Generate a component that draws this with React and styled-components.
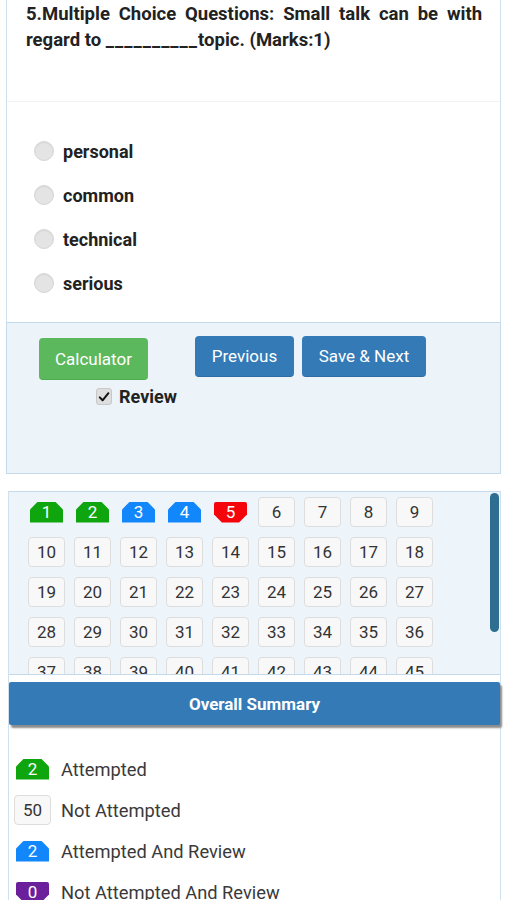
import React from 'react';
import styled, { createGlobalStyle, css } from 'styled-components';

const GlobalStyle = createGlobalStyle`
  html, body {
    margin: 0;
    padding: 0;
    background: #ffffff;
    font-family: Roboto, "Liberation Sans", Arial, sans-serif;
    color: #333333;
  }
`;

const Page = styled.div`
  width: 506px;
  height: 900px;
  overflow: hidden;
`;

const QuestionCard = styled.div`
  margin: 0 5px 0 6px;
  border-left: 1px solid #cfe0ee;
  border-right: 1px solid #cfe0ee;
  background: #ffffff;
`;

const QuestionText = styled.div`
  padding: 1px 18px 0 19px;
  height: 102px;
  box-sizing: border-box;
  font-size: 18.5px;
  font-weight: 700;
  line-height: 26px;
  text-align: justify;
  color: #222222;
  border-bottom: 1px solid #f0f2f4;
`;

const Blank = styled.span`
  letter-spacing: 1px;
`;

const OptionList = styled.div`
  display: flex;
  flex-direction: column;
  gap: 20px;
  padding: 37px 0 27px 27px;
`;

const Option = styled.label`
  display: flex;
  align-items: center;
  gap: 9px;
  height: 24px;
  font-size: 18px;
  font-weight: 700;
  color: #222222;
`;

const Radio = styled.span`
  width: 20px;
  height: 20px;
  border-radius: 50%;
  background: #e4e4e4;
  border: 1px solid #d6d6d6;
  box-sizing: border-box;
  box-shadow: inset 0 1px 1px rgba(0, 0, 0, 0.06);
`;

const ActionPanel = styled.div`
  margin: 0 5px 0 6px;
  height: 152px;
  box-sizing: border-box;
  background: #edf4f9;
  border: 1px solid #c3d9ec;
  display: flex;
  padding: 13px 0 0 32px;
`;

const LeftCol = styled.div`
  display: flex;
  flex-direction: column;
  align-items: flex-start;
  width: 156px;
`;

const Button = styled.button`
  border: none;
  border-radius: 4px;
  color: #ffffff;
  font-family: Roboto, "Liberation Sans", Arial, sans-serif;
  font-size: 17px;
  padding: 0;
  height: ${p => (p.green ? 42 : 41)}px;
  width: ${p => p.width}px;
  margin-top: ${p => (p.green ? 2 : 0)}px;
  background: ${p => (p.green ? '#5cb85c' : '#337ab7')};
  border-bottom: 1px solid ${p => (p.green ? '#4cae4c' : '#2e6da4')};
`;

const ButtonRow = styled.div`
  display: flex;
  gap: 8px;
`;

const ReviewLabel = styled.label`
  display: flex;
  align-items: center;
  gap: 7px;
  margin: 6px 0 0 57px;
  font-size: 18px;
  font-weight: 700;
  color: #222222;
`;

const CheckBox = styled.span`
  width: 16px;
  height: 17px;
  border-radius: 3px;
  background: #dedede;
  border: 1px solid #c8c8c8;
  box-sizing: border-box;
  display: flex;
  align-items: center;
  justify-content: center;
`;

const PaletteWrap = styled.div`
  margin: 17px 5px 0 8px;
  border-left: 1px solid #cfe0ee;
  border-right: 1px solid #cfe0ee;
`;

const Palette = styled.div`
  position: relative;
  height: 184px;
  box-sizing: border-box;
  background: #eef5fa;
  border-top: 1px solid #c3d9ec;
  border-bottom: 1px solid #c3d9ec;
  overflow: hidden;
`;

const ScrollThumb = styled.div`
  position: absolute;
  top: 1px;
  right: 1px;
  width: 9px;
  height: 139px;
  border-radius: 5px;
  background: #2e6e90;
`;

const Grid = styled.div`
  display: grid;
  grid-template-columns: repeat(9, 37px);
  column-gap: 9px;
  row-gap: 10px;
  padding: 5px 0 12px 19px;
`;

const badgeColors = {
  green: '#0ea50e',
  blue: '#1187fb',
  red: '#f4050c',
  purple: '#6b1f9a',
};

const Cell = styled.div`
  width: 37px;
  height: 30px;
  display: flex;
  align-items: center;
  justify-content: center;
  flex-shrink: 0;
`;

const Box = styled.div`
  width: 37px;
  height: 30px;
  box-sizing: border-box;
  border: 1px solid #dddddd;
  border-radius: 4px;
  background: #f8f8f8;
  display: flex;
  align-items: center;
  justify-content: center;
  font-size: 17px;
  color: #333333;
`;

const Badge = styled.div`
  width: 33px;
  height: 21px;
  display: flex;
  align-items: center;
  justify-content: center;
  font-size: 17px;
  color: #ffffff;
  background: ${p => badgeColors[p.kind]};
  ${p =>
    p.kind === 'red' || p.kind === 'purple'
      ? css`
          clip-path: polygon(0 0, 100% 0, 100% 62%, 76% 100%, 24% 100%, 0 62%);
          border-radius: 2px 2px 0 0;
        `
      : css`
          clip-path: polygon(24% 0, 76% 0, 100% 38%, 100% 100%, 0 100%, 0 38%);
        `}
`;

const Summary = styled.div`
  margin: 0 5px 0 8px;
  border-left: 1px solid #cfe0ee;
  border-right: 1px solid #cfe0ee;
  padding-top: 7px;
`;

const SummaryHeader = styled.div`
  height: 43px;
  background: #337ab7;
  color: #ffffff;
  font-size: 17px;
  font-weight: 700;
  display: flex;
  align-items: center;
  justify-content: center;
  border-radius: 2px;
  box-shadow: 2px 3px 2px #8c8c8c;
`;

const Legend = styled.div`
  display: flex;
  flex-direction: column;
  gap: 11px;
  padding: 29px 0 0 5px;
`;

const LegendRow = styled.div`
  display: flex;
  align-items: center;
  gap: 10px;
  font-size: 18.3px;
  color: #3a3a3a;
`;

const statusOf = n => {
  if (n <= 2) return 'green';
  if (n <= 4) return 'blue';
  if (n === 5) return 'red';
  return null;
};

const options = ['personal', 'common', 'technical', 'serious'];
const numbers = Array.from({ length: 54 }, (_, i) => i + 1);

const Check = () => (
  <svg width="12" height="12" viewBox="0 0 12 12">
    <path d="M1.8 6.4 L4.6 9.3 L10.4 2.2" fill="none" stroke="#111" strokeWidth="2" strokeLinecap="round" strokeLinejoin="round" />
  </svg>
);

const App = () => {
  return (
    <Page>
      <GlobalStyle />
      <QuestionCard>
        <QuestionText>
          5.Multiple Choice Questions: Small talk can be with regard to <Blank>__________</Blank>topic. (Marks:1)
        </QuestionText>
        <OptionList>
          {options.map(o => (
            <Option key={o}>
              <Radio />
              {o}
            </Option>
          ))}
        </OptionList>
      </QuestionCard>
      <ActionPanel>
        <LeftCol>
          <Button green width={109}>Calculator</Button>
          <ReviewLabel>
            <CheckBox><Check /></CheckBox>
            Review
          </ReviewLabel>
        </LeftCol>
        <ButtonRow>
          <Button width={99}>Previous</Button>
          <Button width={124}>Save &amp; Next</Button>
        </ButtonRow>
      </ActionPanel>
      <PaletteWrap>
        <Palette>
          <Grid>
            {numbers.map(n => {
              const kind = statusOf(n);
              return (
                <Cell key={n}>
                  {kind ? <Badge kind={kind}>{n}</Badge> : <Box>{n}</Box>}
                </Cell>
              );
            })}
          </Grid>
          <ScrollThumb />
        </Palette>
      </PaletteWrap>
      <Summary>
        <SummaryHeader>Overall Summary</SummaryHeader>
        <Legend>
          <LegendRow>
            <Cell><Badge kind="green">2</Badge></Cell>
            Attempted
          </LegendRow>
          <LegendRow>
            <Cell><Box>50</Box></Cell>
            Not Attempted
          </LegendRow>
          <LegendRow>
            <Cell><Badge kind="blue">2</Badge></Cell>
            Attempted And Review
          </LegendRow>
          <LegendRow>
            <Cell><Badge kind="purple">0</Badge></Cell>
            Not Attempted And Review
          </LegendRow>
        </Legend>
      </Summary>
    </Page>
  );
};

export default App;
